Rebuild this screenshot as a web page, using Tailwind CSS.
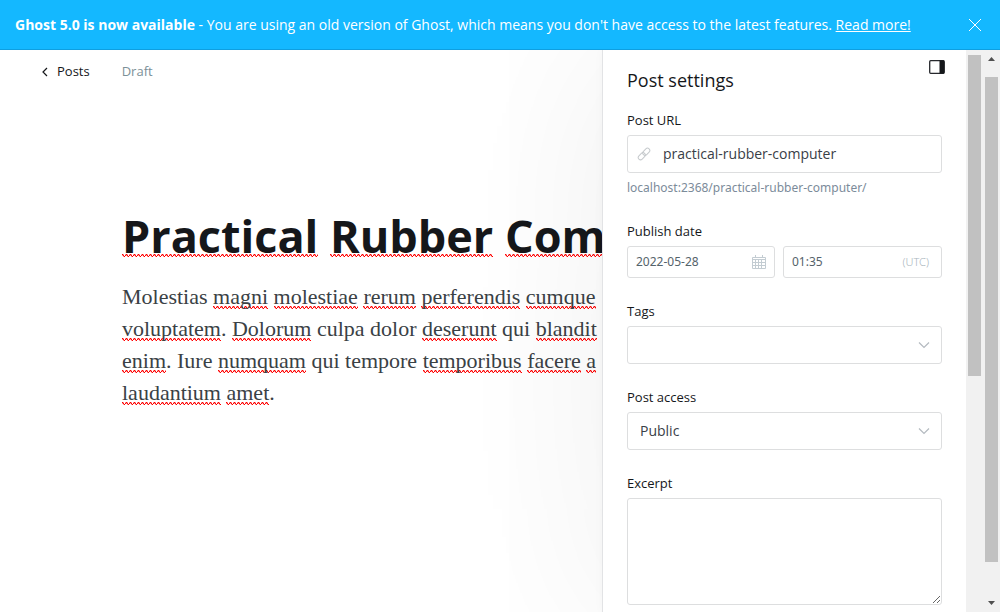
<!DOCTYPE html>
<html lang="en">
<head>
<meta charset="utf-8">
<title>Practical Rubber Computer</title>
<script src="https://cdn.jsdelivr.net/npm/@tailwindcss/browser@4"></script>
<style>
  /* Spell-checker underline */
  .spell { background: url("data:image/svg+xml,%3Csvg xmlns='http://www.w3.org/2000/svg' width='4' height='3'%3E%3Cpath d='M0 0h1v1h1v1h1v-1h1v1h-1v1h-1v-1h-1v-1h-1z' fill='%23ff0000'/%3E%3Cpath d='M0 1h1v1h-1zM1 0h1v1h-1zM1 2h1v1h-1zM3 0h1v1h-1z' fill='%23ff0000' fill-opacity='.4'/%3E%3C/svg%3E") 0 100% repeat-x; }
  h1 .spell { background-position: 0 calc(100% - 9px); }
</style>
</head>
<body class="h-screen overflow-hidden flex flex-col bg-white text-[#15171a] font-['Open_Sans','Noto_Sans',sans-serif] text-[13px]">
<aside class="relative z-10 h-[50px] shrink-0 flex items-center justify-between bg-[#14b8ff] border-b border-[#0f9fe0] pl-[15px] pr-[18px] text-white whitespace-nowrap text-sm">
  <p><b class="font-bold">Ghost 5.0 is now available</b> - You are using an old version of Ghost, which means you don't have access to the latest features. <a href="#" class="underline">Read more!</a></p>
  <button type="button" aria-label="Close" class="size-3.5"><svg viewBox="0 0 14 14" class="size-3.5" fill="none" stroke="currentColor"><path d="M1 1l12 12M13 1L1 13"/></svg></button>
</aside>
<div class="flex flex-1 min-h-0">
  <main class="flex-1 min-w-0 overflow-hidden">
    <nav class="flex items-center h-11 pl-[41px] gap-8">
      <a href="#" class="flex items-center gap-2 font-medium"><svg viewBox="0 0 8 10" class="w-2 h-2.5" fill="none" stroke="currentColor" stroke-width="1.2"><path d="M6 1L2 5l4 4"/></svg>Posts</a>
      <span class="text-[#7c9098]">Draft</span>
    </nav>
    <article class="pl-[122px] pt-[110px] whitespace-nowrap">
      <h1 class="text-[45px] leading-[64px] font-bold"><span class="spell">Practical</span> <span class="spell">Rubber</span> <span class="spell">Computer</span></h1>
      <p class="mt-[13px] font-['Liberation_Serif',serif] text-[22px] leading-8 text-[#3a4145]">Molestias <span class="spell">magni</span> <span class="spell">molestiae</span> <span class="spell">rerum</span> <span class="spell">perferendis</span> <span class="spell">cumque</span><br><span class="spell">voluptatem</span>. <span class="spell">Dolorum</span> culpa dolor <span class="spell">deserunt</span> qui <span class="spell">blandit</span><br><span class="spell">enim</span>. Iure <span class="spell">numquam</span> qui tempore <span class="spell">temporibus</span> <span class="spell">facere</span> <span class="spell">a</span><br><span class="spell">laudantium</span> <span class="spell">amet</span>.</p>
    </article>
  </main>
  <form class="w-[363px] shrink-0 bg-white px-6 pt-4 shadow-[0_0_0_1px_#e2e3e5,0_0_10px_rgba(0,0,0,0.04),0_0_190px_rgba(0,0,0,0.07)]">
    <header class="flex justify-between">
      <h2 class="text-lg leading-7 font-medium">Post settings</h2>
      <button type="button" aria-label="Toggle settings" class="self-start -mt-[7px] -mr-[3px] w-4 h-4"><svg viewBox="0 0 16 16" class="size-4"><rect x=".7" y="1.7" width="14.6" height="12.6" rx="1" fill="none" stroke="#26282c" stroke-width="1.3"/><path d="M10.5 1.5H15v13h-4.500z" fill="#15171a"/></svg></button>
    </header>
    <div class="mt-4">
      <label for="url" class="block mb-[5px] leading-5 font-medium">Post URL</label>
      <div class="flex items-center h-[38px] rounded-[3px] border border-[#dddedf] pl-[9px] gap-3">
        <svg viewBox="0 0 14 14" class="size-3.5" fill="none" stroke="#c5c9cc"><rect x="-1.500" y="-2.300" width="8" height="4.600" rx="2.300" transform="translate(3 11) rotate(-45)"/><rect x="-1.500" y="-2.300" width="8" height="4.600" rx="2.300" transform="translate(7.500 6.500) rotate(-45)"/></svg>
        <input id="url" value="practical-rubber-computer" class="min-w-0 flex-1 text-sm text-[#394047] outline-none">
      </div>
      <p class="pt-[5px] leading-5 text-xs text-[#7c8b9a] font-['Noto_Sans',sans-serif]">localhost:2368/practical-rubber-computer/</p>
    </div>
    <div class="mt-[23px]">
      <label for="date" class="block mb-[5px] leading-5 font-medium">Publish date</label>
      <div class="flex gap-2 text-xs text-[#55636b] font-['Noto_Sans',sans-serif]">
        <div class="w-[148px] flex items-center h-8 rounded-[3px] border border-[#dddedf] px-2">
          <input id="date" value="2022-05-28" class="min-w-0 flex-1 outline-none">
          <svg viewBox="0 0 14 14" class="size-3.5" fill="none" stroke="#c3ccd2"><path d="M.5 2.500h13v11H.5zM.5 4.500h13M3.500 0v3M10.500 0v3M3.500 5v8M6.500 5v8M9.500 5v8M1 7.500h12M1 10.500h12"/></svg>
        </div>
        <div class="flex-1 min-w-0 flex items-center h-8 rounded-[3px] border border-[#dddedf] pl-2 pr-3">
          <input aria-label="Publish time" value="01:35" class="min-w-0 flex-1 outline-none">
          <span class="text-[11px] font-light text-[#a9b5bd]">(UTC)</span>
        </div>
      </div>
    </div>
    <div class="mt-[23px]">
      <label for="tags" class="block mb-[5px] leading-5 font-medium">Tags</label>
      <div class="flex items-center h-[38px] rounded-[3px] border border-[#dddedf] px-3">
        <input id="tags" class="min-w-0 flex-1 outline-none">
        <svg viewBox="0 0 10 6" class="w-2.5 h-1.5 overflow-visible" fill="none" stroke="#b4bac0" stroke-width="1.2"><path d="M0 .5l5 5 5-5"/></svg>
      </div>
    </div>
    <div class="mt-[23px]">
      <label for="access" class="block mb-[5px] leading-5 font-medium">Post access</label>
      <div class="flex items-center h-[38px] rounded-[3px] border border-[#dddedf] px-3">
        <select id="access" class="appearance-none min-w-0 flex-1 text-sm text-[#394047] outline-none"><option>Public</option></select>
        <svg viewBox="0 0 10 6" class="w-2.5 h-1.5 overflow-visible" fill="none" stroke="#b4bac0" stroke-width="1.2"><path d="M0 .5l5 5 5-5"/></svg>
      </div>
    </div>
    <div class="mt-[23px]">
      <label for="excerpt" class="block mb-[5px] leading-5 font-medium">Excerpt</label>
      <textarea id="excerpt" class="block w-full h-[107px] rounded-[3px] border border-[#dddedf] resize outline-none"></textarea>
    </div>
  </form>
  <div class="w-[17px] shrink-0 bg-[#f1f1f1] pt-[5px] pl-[2px] z-10"><div class="w-[13px] h-[321px] bg-[#c1c1c1]"></div></div>
  <div class="w-[17px] shrink-0 bg-[#f1f1f1] flex flex-col items-center py-[7px] z-10">
    <svg viewBox="0 0 7 4" class="w-[7px] h-1 shrink-0" fill="#505050"><path d="M3.500 0L7 4H0z"/></svg>
    <div class="mt-4 w-[13px] h-[485px] bg-[#c1c1c1]"></div>
    <svg viewBox="0 0 7 4" class="w-[7px] h-1 mt-auto shrink-0" fill="#505050"><path d="M0 0h7L3.500 4z"/></svg>
  </div>
</div>
</body>
</html>
